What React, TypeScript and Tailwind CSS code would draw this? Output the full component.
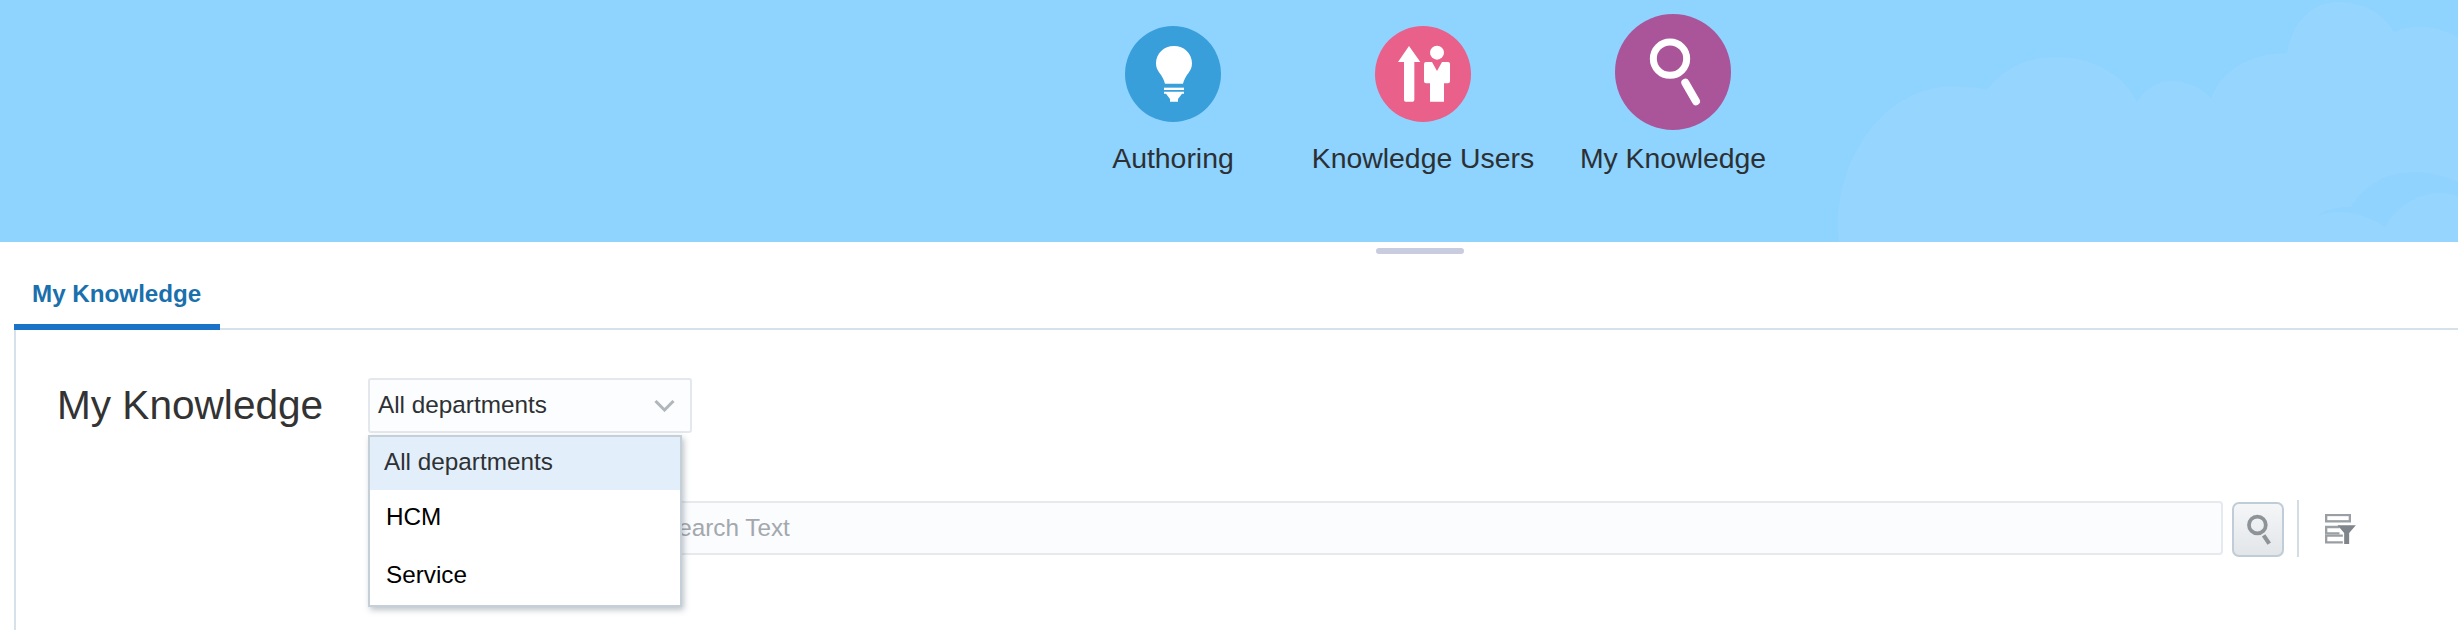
const font = "font-['Liberation_Sans',Arial,sans-serif]";

function Cloud() {
  return (
    <svg
      className="absolute inset-0 h-[242px] w-[2458px]"
      viewBox="0 0 2458 242"
      fill="none"
    >
      <path
        d="M1839 242 C1830 170 1880 80 1962 87 C1972 87 1980 88 1987 90 C2005 66 2030 57 2057 57 C2095 57 2124 76 2137 102 C2146 88 2158 81 2171 81 C2188 81 2202 88 2211 98 C2222 70 2250 53 2287 53 C2292 22 2312 2 2338 2 C2364 2 2384 14 2394 32 C2414 23 2438 26 2458 37 V242 Z"
        fill="#96d5fd"
      />
      <path
        d="M2318 215 C2330 208 2340 207 2351 207 C2364 184 2388 172 2413 172 C2430 172 2445 176 2458 182 V197 C2452 194 2446 193 2441 193 C2416 193 2396 208 2385 227 C2366 214 2342 208 2318 215 Z"
        fill="#90d3fe"
      />
    </svg>
  );
}

function BulbIcon() {
  return (
    <svg viewBox="45 48 288 288" className="h-[96px] w-[96px]" fill="#fff">
      <path d="M192 108 C162 108 138 130 138 160 C138 172 142 180 148 188 C156 198 162 208 165 221 L219 221 C222 208 228 198 236 188 C242 180 246 172 246 160 C246 130 222 108 192 108 Z" />
      <rect x="162" y="233" width="60" height="7" />
      <polygon points="162,245 222,245 222,251 216,251 204,267 204,275 180,275 180,267 168,251 162,251" />
    </svg>
  );
}

function UsersIcon() {
  return (
    <svg viewBox="45 48 288 288" className="h-[96px] w-[96px]" fill="#fff">
      <path d="M147 108 L181 156 H163 V270 Q163 275 158 275 H137 Q132 275 132 270 V156 H114 Z" />
      <circle cx="231" cy="128" r="21" />
      <path d="M198 156 H216 L231 183 L246 156 H264 Q270 156 270 162 V214 Q270 220 264 220 H252 V275 H210 V220 H198 Q192 220 192 214 V162 Q192 156 198 156 Z" />
    </svg>
  );
}

function SearchIcon() {
  return (
    <svg viewBox="45 42 348 348" className="h-[116px] w-[116px]" fill="none" stroke="#fff">
      <circle cx="210" cy="176" r="50" strokeWidth="21" />
      <line x1="256" y1="248" x2="288" y2="304" strokeWidth="24" strokeLinecap="round" />
    </svg>
  );
}

const launchers = [
  { label: "Authoring", bg: "bg-[#389fdb]", box: "pt-[26px]", text: "mt-[20px]", icon: <BulbIcon /> },
  { label: "Knowledge Users", bg: "bg-[#e9608a]", box: "pt-[26px]", text: "mt-[20px]", icon: <UsersIcon /> },
  { label: "My Knowledge", bg: "bg-[#aa5599]", box: "pt-[14px]", text: "mt-[12px]", icon: <SearchIcon /> },
];

function Header() {
  return (
    <div className="relative h-[242px] overflow-hidden bg-[#8fd3ff]">
      <Cloud />
      <div className="relative flex pl-[1048px]">
        {launchers.map((l) => (
          <div key={l.label} className={`flex w-[250px] flex-col items-center ${l.box}`}>
            <div className={`rounded-full ${l.bg}`}>{l.icon}</div>
            <span className={`${l.text} whitespace-nowrap text-[28.4px] leading-[32px] text-[#2c3033]`}>
              {l.label}
            </span>
          </div>
        ))}
      </div>
    </div>
  );
}

function DepartmentSelect() {
  return (
    <div className="relative">
      <div className="flex h-[55px] w-[324px] items-center justify-between rounded-[3px] border-2 border-[#e4e8ec] bg-[#fcfdfe] pl-2 pr-[15px] text-[24.3px] text-[#2e3133]">
        <span>All departments</span>
        <svg width="21" height="12" viewBox="0 0 21 12" fill="none" stroke="#b0b6ba" strokeWidth="3">
          <path d="M1.5 1 L10.5 10 L19.5 1" />
        </svg>
      </div>
      <div className="absolute left-0 top-[57px] z-10 w-[314px] border-2 border-[#c5cfd8] bg-white text-[24.3px] shadow-[2px_3px_6px_rgba(70,85,100,0.35)]">
        <div className="flex h-[53px] items-center bg-[#e2effb] pb-[3px] pl-[14px] text-[#2e3133]">All departments</div>
        <div className="flex h-[55px] items-center pl-[16px] text-black">HCM</div>
        <div className="flex h-[60px] items-center pl-[16px] text-black">Service</div>
      </div>
    </div>
  );
}

function SearchRow() {
  return (
    <div className="mt-[68px] flex items-start pl-[634px]">
      <div className="flex h-[54px] w-[1573px] items-center rounded-[4px] border-2 border-[#e6eaee] bg-[#fbfcfe] pl-[10px] text-[24.3px] text-[#a3a8ad]">
        Search Text
      </div>
      <button className="ml-[9px] mt-[1px] h-[55px] w-[52px] rounded-[7px] border-2 border-[#c0ccd8] bg-gradient-to-b from-[#f4f6f8] to-[#e3e6e9]">
        <svg viewBox="157 69 154 161" className="h-full w-full" fill="none" stroke="#8d9397">
          <circle cx="232" cy="135" r="27" strokeWidth="12" />
          <line x1="252" y1="168" x2="270" y2="195" strokeWidth="13" />
        </svg>
      </button>
      <div className="ml-[13px] mt-[-1px] h-[57px] w-[2px] bg-[#d3dde6]" />
      <svg viewBox="433 103 92 90" className="ml-[26px] mt-[13px] h-[30px] w-[31px]">
        <g fill="none" stroke="#9a9fa3" strokeWidth="7">
          <rect x="436" y="106" width="71" height="19" />
          <path d="M476 142 H436 V161 H476" />
          <path d="M486 168 H436 V188 H486" />
        </g>
        <polygon points="470,137 525,137 505,160 505,193 490,193 490,160" fill="#7f858a" />
      </svg>
    </div>
  );
}

export default function App() {
  return (
    <div className={`h-[630px] w-[2458px] overflow-hidden bg-white ${font}`}>
      <Header />
      <div className="ml-[1376px] mt-[6px] h-[6px] w-[88px] rounded-[3px] bg-[#c9cbde]" />
      <div className="ml-[14px] mt-[2px] h-[74px] border-b-2 border-[#d6e1ea]">
        <div className="flex h-[74px] w-[206px] items-center border-b-[6px] border-[#1a73c7] pl-[18px] pt-[8px] text-[24.2px] font-bold text-[#1a6fad]">
          My Knowledge
        </div>
      </div>
      <div className="ml-[14px] h-[300px] border-l-2 border-[#d6e1ea] pt-[48px]">
        <div className="flex items-start">
          <h1 className="w-[352px] pl-[41px] text-[40.6px] leading-[54px] text-[#333]">My Knowledge</h1>
          <DepartmentSelect />
        </div>
        <SearchRow />
      </div>
    </div>
  );
}
